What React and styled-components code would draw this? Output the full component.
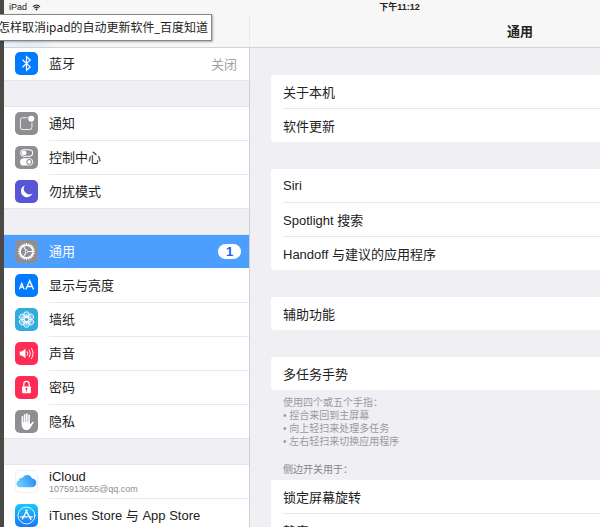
import React, { useState } from 'react'
import styled, { createGlobalStyle } from 'styled-components'

const petals = [0, 60, 120, 180, 240, 300]
const teeth = Array.from({ length: 20 }, (_, i) => i * 18)

const icons = {
  bluetooth: {
    bg: '#007aff',
    art: <path d="M22 23 L45 44 L34 54 V14 L45 24 L22 45" fill="none" stroke="#fff" strokeWidth="3.6" />,
  },
  notifications: {
    bg: '#8e8e93',
    art: (
      <>
        <rect x="16" y="17" width="34" height="35" rx="7" fill="none" stroke="#fff" strokeWidth="2.6" />
        <circle cx="48" cy="20" r="11.5" fill="#8e8e93" />
        <circle cx="48" cy="20" r="9" fill="#fff" />
      </>
    ),
  },
  control: {
    bg: '#8e8e93',
    art: (
      <>
        <rect x="17" y="11" width="35" height="19" rx="9.5" fill="none" stroke="#fff" strokeWidth="3" />
        <circle cx="27" cy="20.5" r="7" fill="#fff" />
        <rect x="15" y="36" width="38" height="22" rx="11" fill="#fff" />
        <circle cx="42" cy="47" r="7" fill="#fff" stroke="#8e8e93" strokeWidth="3" />
      </>
    ),
  },
  moon: {
    bg: '#5856d6',
    art: <path d="M29 16 A18 18 0 1 0 52 40 A17 17 0 0 1 29 16 Z" fill="#fff" />,
  },
  gear: {
    bg: '#8e8e93',
    art: (
      <g stroke="#fff" fill="none">
        <circle cx="34" cy="34" r="19" strokeWidth="5" />
        {teeth.map((a) => (
          <path key={a} d="M34 9 V15" strokeWidth="3.6" transform={`rotate(${a} 34 34)`} />
        ))}
        <circle cx="34" cy="34" r="4" strokeWidth="2.4" />
        {[90, 210, 330].map((a) => (
          <path key={a} d="M34 30 V16" strokeWidth="2.8" transform={`rotate(${a} 34 34)`} />
        ))}
      </g>
    ),
  },
  display: {
    bg: '#007aff',
    art: (
      <g fill="none" stroke="#fff" strokeWidth="3.6">
        <path d="M13 45 L20 28 L27 45 M15.5 39 H24.5" />
        <path d="M32 46 L43.5 20 L55 46 M36 37 H51" strokeWidth="4" />
      </g>
    ),
  },
  wallpaper: {
    bg: '#35aadc',
    art: (
      <g fill="none" stroke="#fff" strokeWidth="2.6">
        {petals.map((a) => (
          <g key={a} transform={`rotate(${a} 34 34)`}>
            <circle cx="34" cy="19.5" r="8.5" fill="#fff" fillOpacity="0.25" />
            <path d="M34 28 V21" />
          </g>
        ))}
        <circle cx="34" cy="34" r="6.5" />
        <circle cx="34" cy="34" r="14" strokeOpacity="0.7" />
      </g>
    ),
  },
  sound: {
    bg: '#ff2d55',
    art: (
      <>
        <path d="M14 28 H20 L31 20 V48 L20 40 H14 Z" fill="#fff" />
        <g fill="none" stroke="#fff" strokeWidth="2.8">
          <path d="M36 28 Q40 34 36 40" />
          <path d="M42 23 Q49 34 42 45" />
          <path d="M48 18 Q59 34 48 50" />
        </g>
      </>
    ),
  },
  lock: {
    bg: '#ff2d55',
    art: (
      <>
        <rect x="21" y="31" width="26" height="20" rx="2" fill="#fff" />
        <path d="M26 32 V24 A8 8 0 0 1 42 24 V32" fill="none" stroke="#fff" strokeWidth="3.4" />
        <circle cx="34" cy="38" r="3" fill="#ff2d55" />
        <path d="M34 38 V46" stroke="#ff2d55" strokeWidth="2.4" />
      </>
    ),
  },
  hand: {
    bg: '#8e8e93',
    art: (
      <>
        <g fill="none" stroke="#fff" strokeWidth="4.8" strokeLinecap="round">
          <path d="M22 40 V20" />
          <path d="M28.5 38 V14" />
          <path d="M35 38 V12" />
          <path d="M41.5 38 V16" />
          <path d="M45 48 L53 37" />
        </g>
        <path d="M19.700 36 H43.800 V42 L50 38 L48 48 Q44 59 34 59 Q21 59 19.700 44 Z" fill="#fff" />
      </>
    ),
  },
  cloud: {
    bg: '#fff',
    outline: true,
    art: (
      <>
        <linearGradient id="cloudFill" x1="0" x2="1" y1="0.300" y2="0">
          <stop offset="0" stopColor="#66cdf9" />
          <stop offset="1" stopColor="#2383f4" />
        </linearGradient>
        <path
          d="M17 51 A10.500 10.500 0 0 1 11 31 A9 9 0 0 1 22 23 A15.500 15.500 0 0 1 50 25 A13 13 0 0 1 50 51 Z"
          fill="url(#cloudFill)"
        />
      </>
    ),
  },
  store: {
    bg: 'linear-gradient(#1ac6fb, #1d77f2)',
    art: (
      <g fill="none" stroke="#fff" strokeLinecap="round">
        <circle cx="34" cy="34" r="25" strokeWidth="2.6" />
        <path d="M36 18 L22 44 M32 18 L47 46 M17 38 H37 M44 38 H51" strokeWidth="4" />
      </g>
    ),
  },
}

const sidebarGroups = [
  [{ id: 'bluetooth', label: '蓝牙', value: '关闭' }],
  [
    { id: 'notifications', label: '通知' },
    { id: 'control', label: '控制中心' },
    { id: 'moon', label: '勿扰模式' },
  ],
  [
    { id: 'gear', label: '通用', badge: 1 },
    { id: 'display', label: '显示与亮度' },
    { id: 'wallpaper', label: '墙纸' },
    { id: 'sound', label: '声音' },
    { id: 'lock', label: '密码' },
    { id: 'hand', label: '隐私' },
  ],
  [
    { id: 'cloud', label: 'iCloud', detail: '1075913655@qq.com' },
    { id: 'store', label: 'iTunes Store 与 App Store' },
  ],
]

const cards = [
  ['关于本机', '软件更新'],
  ['Siri', 'Spotlight 搜索', 'Handoff 与建议的应用程序'],
  ['辅助功能'],
  ['多任务手势'],
]

const gestures = ['捏合来回到主屏幕', '向上轻扫来处理多任务', '左右轻扫来切换应用程序']

function Card({ items }) {
  return (
    <CardBox>
      {items.map((item) => (
        <CardRow key={item}>{item}</CardRow>
      ))}
    </CardBox>
  )
}

function App() {
  const [selected, setSelected] = useState('gear')

  return (
    <Page>
      <GlobalStyle />
      <Screen>
        <Header>
          <StatusBar>
            <Carrier>
              iPad
              <Wifi viewBox="0 0 24 20">
                <g fill="none" stroke="#222" strokeWidth="3.2">
                  <path d="M2 8 Q12 -2 22 8" />
                  <path d="M6 12 Q12 6 18 12" />
                </g>
                <path d="M8.5 14.5 Q12 11.5 15.5 14.5 L12 19 Z" fill="#222" />
              </Wifi>
            </Carrier>
            <Clock>下午11:12</Clock>
          </StatusBar>
          <TitleBar>
            <SidebarTitle />
            <Title>通用</Title>
          </TitleBar>
        </Header>
        <Panes>
          <Sidebar>
            {sidebarGroups.map((group) => (
              <Group key={group[0].id}>
                {group.map((item) => (
                  <SidebarRow
                    key={item.id}
                    $active={item.id === selected}
                    onClick={() => setSelected(item.id)}
                  >
                    <Icon viewBox="0 0 68 68" $bg={icons[item.id].bg} $outline={icons[item.id].outline}>
                      {icons[item.id].art}
                    </Icon>
                    <RowText>
                      <Label>
                        {item.label}
                        {item.detail && <Detail>{item.detail}</Detail>}
                      </Label>
                      {item.value && <Value>{item.value}</Value>}
                      {item.badge && <Badge>{item.badge}</Badge>}
                    </RowText>
                  </SidebarRow>
                ))}
              </Group>
            ))}
          </Sidebar>
          <Content>
            <CardList>
              {cards.map((items) => (
                <Card key={items[0]} items={items} />
              ))}
            </CardList>
            <Note>
              使用四个或五个手指：
              {gestures.map((text) => (
                <div key={text}>• {text}</div>
              ))}
            </Note>
            <Caption>侧边开关用于：</Caption>
            <Card items={['锁定屏幕旋转', '静音']} />
          </Content>
        </Panes>
      </Screen>
      <Tooltip role="tooltip">怎样取消ipad的自动更新软件_百度知道</Tooltip>
    </Page>
  )
}

export default App

const GlobalStyle = createGlobalStyle`
    * {
        box-sizing: border-box;
    }
    body {
        margin: 0;
        overflow: hidden;
        font-family: 'Liberation Sans', 'Noto Sans CJK SC', sans-serif;
        font-size: 13px;
        color: #222;
    }
    button {
        font: inherit;
        color: inherit;
        border: 0;
        padding: 0;
        text-align: left;
        cursor: pointer;
    }
`

const Page = styled.div`
    position: relative;
    height: 100vh;
    padding-left: 4px;
    overflow: hidden;
    background: #4b4945;
`

/* the tablet screen runs past the right edge of the window */
const Screen = styled.div`
    display: flex;
    flex-direction: column;
    width: 131vw;
    height: 100%;
    background: #efeff4;
`

const Header = styled.header`
    position: relative;
    z-index: 1;
    flex: none;
    height: 47px;
    background: #f7f7f7;
    box-shadow: 0 1px 0 #d3d3d6;
`

const StatusBar = styled.div`
    display: grid;
    grid-template-columns: 1fr auto 1fr;
    height: 14px;
    padding-left: 5px;
    font-size: 9px;
    line-height: 14px;
`

const Carrier = styled.div`
    display: flex;
    align-items: center;
    gap: 5px;
`

const Wifi = styled.svg`
    width: 9px;
    height: 7px;
`

const Clock = styled.div`
    font-weight: bold;
`

const TitleBar = styled.div`
    display: flex;
    height: 33px;
`

const SidebarTitle = styled.div`
    width: 246px;
    border-right: 1px solid #ebebed;
    background: radial-gradient(circle at 22px 40px, #dcecfb, #f7f7f7 34px);
`

const Title = styled.h1`
    flex: 1;
    margin: 0;
    font-size: 13px;
    font-weight: bold;
    line-height: 35px;
    text-align: center;
`

const Panes = styled.div`
    display: flex;
    flex: 1;
    min-height: 0;
`

const Sidebar = styled.nav`
    display: flex;
    flex-direction: column;
    gap: 27px;
    width: 246px;
    border-right: 1px solid #d0d0d4;
    overflow: hidden;
`

const Group = styled.div`
    display: flex;
    flex-direction: column;
    flex: none;
    background: #fff;
    box-shadow: 0 0 0 1px #e6e6ea;
`

const RowText = styled.span`
    display: flex;
    flex: 1;
    align-items: center;
    justify-content: space-between;
    height: 100%;
    padding-right: 12px;
`

const SidebarRow = styled.button`
    display: flex;
    align-items: center;
    gap: 11px;
    height: 33px;
    padding-left: 11px;
    background: ${(props) => (props.$active ? '#4c9eff' : '#fff')};
    color: ${(props) => (props.$active ? '#fff' : '#222')};

    & + & {
        height: 34px;
    }
    & + & ${RowText} {
        border-top: 1px solid #e9e9eb;
    }
`

const Icon = styled.svg`
    flex: none;
    width: 23px;
    height: 23px;
    border-radius: 5px;
    background: ${(props) => props.$bg};
    box-shadow: ${(props) => (props.$outline ? 'inset 0 0 0 1px #f0f0f2' : 'none')};
`

const Label = styled.span`
    display: flex;
    flex-direction: column;
    line-height: 15px;
    white-space: nowrap;
`

const Detail = styled.small`
    font-size: 9px;
    line-height: 11px;
    color: #8e8e93;
`

const Value = styled.span`
    color: #a0a0a5;
`

const Badge = styled.span`
    width: 23px;
    margin-right: -4px;
    border-radius: 8px;
    background: #fff;
    color: #2a5bea;
    font-weight: bold;
    line-height: 15px;
    text-align: center;
`

const Content = styled.main`
    flex: 1;
    padding: 28px 21px 0;
    overflow: hidden;
`

const CardList = styled.div`
    display: flex;
    flex-direction: column;
    gap: 27px;
`

const CardBox = styled.div`
    display: flex;
    flex-direction: column;
    padding-left: 12px;
    border-radius: 3px;
    background: #fff;
`

const CardRow = styled.button`
    height: 33px;
    background: none;

    & + & {
        height: 34px;
        border-top: 1px solid #e9e9eb;
    }
`

const Note = styled.div`
    padding: 6px 12px 0;
    font-size: 10px;
    line-height: 13px;
    color: #9a9a9f;
`

const Caption = styled.h2`
    margin: 15px 12px 4px;
    font-size: 10px;
    font-weight: normal;
    line-height: 13px;
    color: #85858a;
`

const Tooltip = styled.div`
    position: absolute;
    z-index: 2;
    top: 14px;
    left: -4px;
    padding: 0 3px 0 1px;
    border: 1px solid #868686;
    background: #fff;
    box-shadow: 1px 1px 2px rgba(0, 0, 0, 0.3);
    color: #222;
    font-family: 'Noto Sans', 'Noto Sans CJK SC', sans-serif;
    font-size: 12px;
    line-height: 25px;
    white-space: nowrap;
`
